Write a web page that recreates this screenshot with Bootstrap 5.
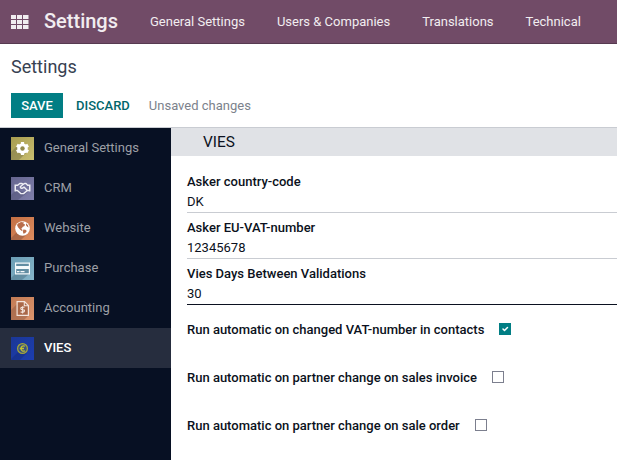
<!DOCTYPE html>
<html lang="en">
<head>
<meta charset="utf-8">
<meta name="viewport" content="width=device-width, initial-scale=1">
<title>Settings</title>
<link href="https://cdn.jsdelivr.net/npm/bootstrap@5.3.0/dist/css/bootstrap.min.css" rel="stylesheet">
<style>
body{font-family:Roboto,"Liberation Sans",sans-serif;font-size:13px;line-height:20px;color:#0b1120;background:#fff;height:460px;overflow:hidden}
.topbar{height:44px;background:#714b67;border-bottom:1px solid #563a50}
.topbar .navbar-brand{font-size:20px;font-weight:500;line-height:24px;color:#f1edf0;margin-left:15px;margin-right:32px;margin-top:-1px}
.topbar .nav-link{color:#f1edf0;line-height:20px;letter-spacing:0}
.topbar .navbar-nav{gap:32px}
.control{height:84px;padding:12px 11px 0;border-bottom:1px solid #c9ccd2}
.control h1{font-size:18px;line-height:22px;font-weight:400;color:#374151;margin:0 0 15px}
.control .btn{font-size:13px;font-weight:500;line-height:15px;border:0;border-radius:0;height:25px}
.btn-save{background:#017e84;color:#fff;width:52px}
.btn-discard{color:#01666b;margin-left:9px}
.note{color:#7c828c;margin-left:-1px}
.side{width:171px;background:#071023}
.side .nav-link{height:40px;padding:0 0 0 11px;gap:10px;color:#9c9fa5}
.side .nav-link.active{background:#262d3e;color:#fff;font-weight:500}
.side svg{width:23px;height:23px;margin-top:1px}
.section-title{height:28px;padding-left:32px;font-size:15.4px;line-height:28px;font-weight:400;background:#e0e2e6;margin:0}
.fields{padding:16px 0 0 16px}
.field{height:46px}
.field label{display:block;font-weight:500;line-height:20px}
.field input{display:block;width:100%;height:21px;border:0;border-bottom:1px solid #c9ccd2;border-radius:0;padding:0 0 2px;outline:0;background:none;color:#0b1120;line-height:18px}
.field .current{border-bottom-color:#0b1120}
.toggles{padding:10px 0 0 16px}
.toggle{height:48px;font-weight:500}
.toggle .form-check-input{width:12px;height:12px;margin:-2px 0 0 15px;border:1px solid #7c7f8e;border-radius:0;float:none}
.toggle .form-check-input:checked{background-color:#017e84;border-color:#017e84;background-size:10px 10px}
</style>
<script src="https://cdn.jsdelivr.net/npm/bootstrap@5.3.0/dist/js/bootstrap.bundle.min.js"></script>
</head>
<body class="d-flex flex-column">
<nav class="navbar navbar-expand topbar p-0 flex-shrink-0 flex-nowrap justify-content-start">
  <svg class="ms-2 flex-shrink-0" width="21" height="14" viewBox="-3 0 21 14" fill="#f1edf0"><path d="M0 0h5v4H0zM6 0h5v4H6zM12 0h5.500v4H12zM0 5h5v4H0zM6 5h5v4H6zM12 5h5.500v4H12zM0 10h5v4H0zM6 10h5v4H6zM12 10h5.500v4H12z"/></svg>
  <a class="navbar-brand p-0" href="#">Settings</a>
  <div class="navbar-nav text-nowrap">
    <a class="nav-link p-0" href="#">General Settings</a>
    <a class="nav-link p-0" href="#">Users &amp; Companies</a>
    <a class="nav-link p-0" href="#">Translations</a>
    <a class="nav-link p-0" href="#">Technical</a>
  </div>
</nav>
<header class="control flex-shrink-0">
  <h1>Settings</h1>
  <div class="d-flex align-items-center">
    <button class="btn btn-save p-0">SAVE</button>
    <button class="btn btn-discard p-0 px-1 me-3">DISCARD</button>
    <span class="note">Unsaved changes</span>
  </div>
</header>
<div class="d-flex flex-grow-1">
  <aside class="side flex-shrink-0">
    <nav class="nav flex-column">
      <a class="nav-link d-flex align-items-center" href="#">
        <svg viewBox="0 0 23 23"><defs><linearGradient id="g1" x2="1" y2="1"><stop stop-color="#a79c50"/><stop offset="1" stop-color="#c9be70"/></linearGradient></defs><path fill="url(#g1)" d="M0 0h23v23H0z"/><path fill="#5f5d3e" opacity=".35" d="M7 8 0 15v8h8l8-8z"/><g fill="#fff"><circle cx="11.500" cy="11.500" r="5.200"/><path d="M9.900 5h3.200v13H9.900z"/><path d="M9.900 5h3.200v13H9.900z" transform="rotate(60 11.500 11.500)"/><path d="M9.900 5h3.200v13H9.900z" transform="rotate(120 11.500 11.500)"/></g><circle cx="11.500" cy="11.500" r="2.200" fill="#928a4c"/></svg>
        <span>General Settings</span></a>
      <a class="nav-link d-flex align-items-center" href="#">
        <svg viewBox="0 0 23 23"><defs><linearGradient id="g2" x2="1" y2="1"><stop stop-color="#65658f"/><stop offset="1" stop-color="#7f7fab"/></linearGradient></defs><path fill="url(#g2)" d="M0 0h23v23H0z"/><path fill="#414464" opacity=".35" d="M4 14 0 18v5h7l10-8z"/><path fill="#eeeef4" d="M3.500 7.500h1.500v7H3.500zM18 7.500h1.500v7H18z"/><path fill="none" stroke="#eeeef4" stroke-width="1.400" stroke-linejoin="round" d="M5 8.200h1.700L8.800 6.500h2.200l1.200.8 1.300-.8h1.500l1.600 1.700H18M5 13.500h1.400l3.400 3.100h2.700l3.900-3.100H18M12.200 7.300 9.300 9.800q.3 2 2.200 1.300l1.500-1 3.400 3.400"/></svg>
        <span>CRM</span></a>
      <a class="nav-link d-flex align-items-center" href="#">
        <svg viewBox="0 0 23 23"><defs><linearGradient id="g3" x2="1" y2="1"><stop stop-color="#c36f43"/><stop offset="1" stop-color="#dd8d60"/></linearGradient></defs><path fill="url(#g3)" d="M0 0h23v23H0z"/><path fill="#744536" opacity=".4" d="M6 15 0 21v2h10l7-7z"/><circle cx="11.500" cy="11.500" r="7.300" fill="#fff"/><path fill="#b96d4a" d="M7 6.500 10 5l3 .5-.7 1.500 1.700.3-.5 1.700-2 1-.5 1.500-1.300-.3 1.800 1.800-.3 1.200-2-1.500-2.200-2.500L6 8zM15 6.300l2 2 .5 2.200-1.500-1-1-1.200zM12.300 12.500l2.200.2 1.300 1.300-1.500 2-1.800.8-.6-2z"/></svg>
        <span>Website</span></a>
      <a class="nav-link d-flex align-items-center" href="#">
        <svg viewBox="0 0 23 23"><defs><linearGradient id="g4" x2="1" y2="1"><stop stop-color="#6b9db4"/><stop offset="1" stop-color="#86b5c9"/></linearGradient></defs><path fill="url(#g4)" d="M0 0h23v23H0z"/><path fill="#3f6275" opacity=".4" d="M4 17 0 21v2h11l7-6z"/><path fill="#628da2" stroke="#f5f9fb" stroke-width="1.200" d="M4.600 6.100h13.800v10.800H4.600z"/><path fill="#f5f9fb" d="M4.500 9h14v3h-14zM6 14h2.500v1.200H6zM9.500 14h4v1.200h-4z"/></svg>
        <span>Purchase</span></a>
      <a class="nav-link d-flex align-items-center" href="#">
        <svg viewBox="0 0 23 23"><defs><linearGradient id="g5" x2="1" y2="1"><stop stop-color="#c17a54"/><stop offset="1" stop-color="#db946d"/></linearGradient></defs><path fill="url(#g5)" d="M0 0h23v23H0z"/><path fill="#814f3c" opacity=".4" d="M6 7 0 13v10h13l4-4z"/><path fill="#a96748" stroke="#f3e4dc" stroke-width="1.200" d="M6.100 4.600h7.400l3.900 3.900v9.900H6.100z"/><path fill="none" stroke="#f3e4dc" stroke-width="1.100" d="M13.300 4.800v3.900h4M13.500 10.300H11q-1.300.2-1.200 1.300.1 1 1.900 1.100 1.900.1 1.800 1.200-.1 1.100-1.500 1.200H9.600M11.600 9.200v7.200"/></svg>
        <span>Accounting</span></a>
      <a class="nav-link d-flex align-items-center active" href="#">
        <svg viewBox="0 0 23 23"><defs><linearGradient id="g6" x2="1" y2="1"><stop stop-color="#1b3796"/><stop offset="1" stop-color="#1c3daf"/></linearGradient></defs><path fill="url(#g6)" d="M0 0h23v23H0z"/><path fill="#0d2065" opacity=".3" d="M7 15 0 22v1h9l7-7z"/><circle cx="11.500" cy="11.500" r="4.900" fill="#3a5280" stroke="#a3a63a" stroke-width="1.200"/><path fill="none" stroke="#c3c42e" stroke-width="1.300" d="M13.900 9.300q-1.500-.9-2.800 0-1.100.8-1.100 2.200t1.100 2.200q1.300.9 2.800 0M8.800 11.500h4.200"/></svg>
        <span>VIES</span></a>
    </nav>
  </aside>
  <main class="flex-grow-1">
    <h2 class="section-title">VIES</h2>
    <div class="fields">
      <div class="field"><label for="cc">Asker country-code</label><input id="cc" type="text" value="DK"></div>
      <div class="field"><label for="vat">Asker EU-VAT-number</label><input id="vat" type="text" value="12345678"></div>
      <div class="field"><label for="days">Vies Days Between Validations</label><input id="days" class="current" type="text" value="30"></div>
    </div>
    <div class="toggles">
      <div class="toggle d-flex align-items-start"><label class="d-flex align-items-center">Run automatic on changed VAT-number in contacts<input class="form-check-input" type="checkbox" checked></label></div>
      <div class="toggle d-flex align-items-start"><label class="d-flex align-items-center">Run automatic on partner change on sales invoice<input class="form-check-input" type="checkbox"></label></div>
      <div class="toggle d-flex align-items-start"><label class="d-flex align-items-center">Run automatic on partner change on sale order<input class="form-check-input" type="checkbox"></label></div>
    </div>
  </main>
</div>
</body>
</html>
